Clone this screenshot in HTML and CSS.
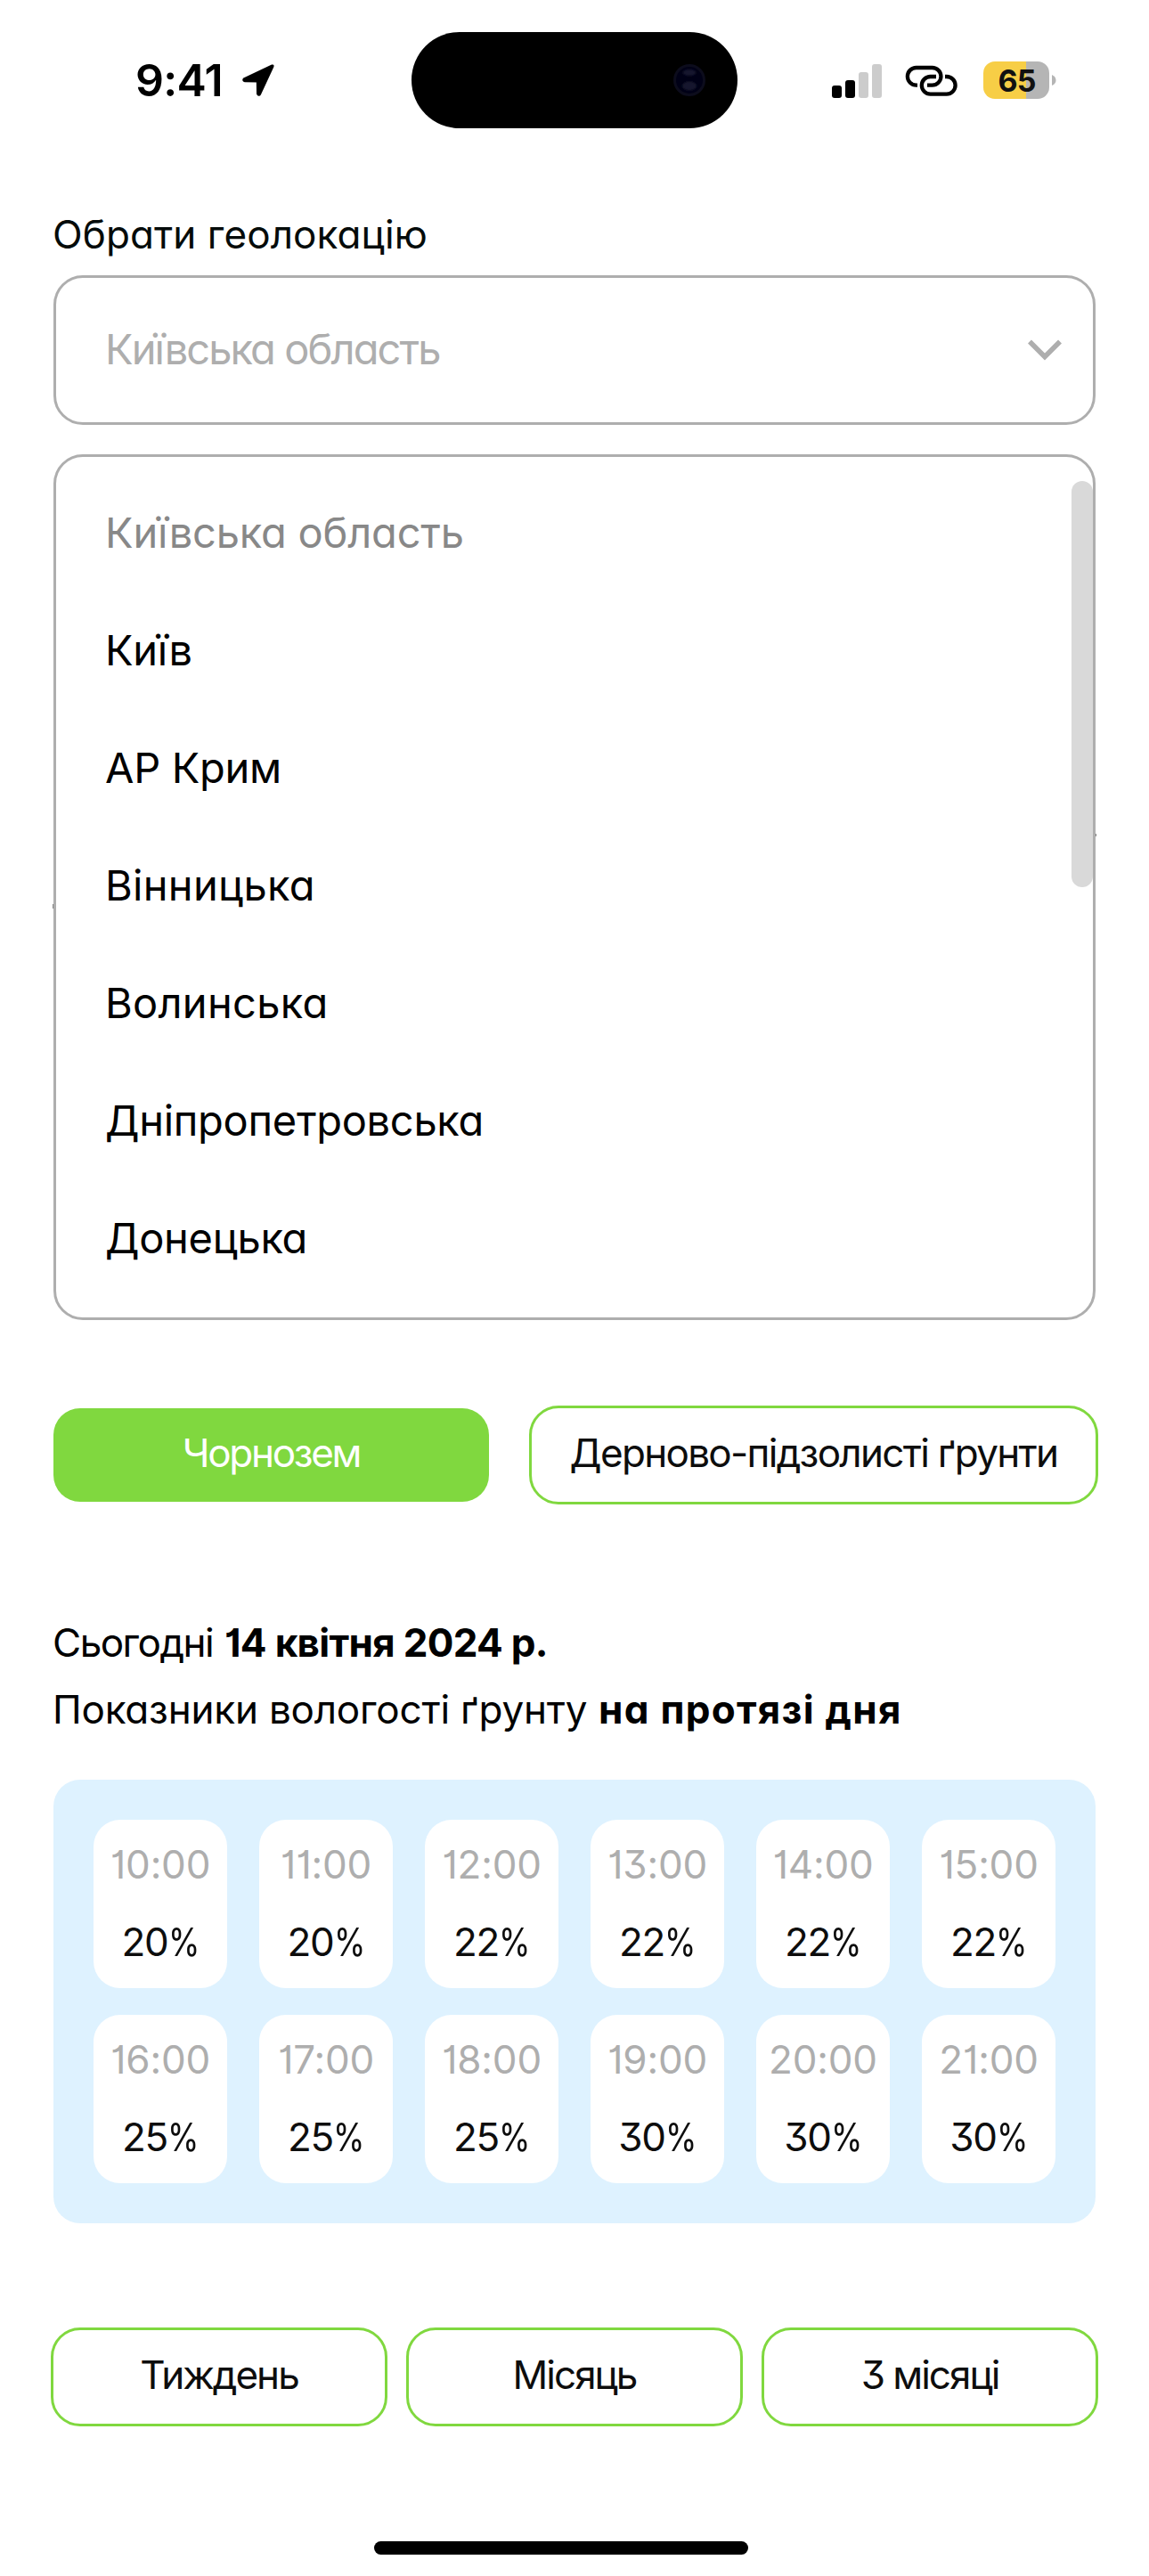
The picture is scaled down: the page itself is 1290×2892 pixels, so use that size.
FILE: index.html
```html
<!DOCTYPE html>
<html lang="uk">
<head>
<meta charset="utf-8">
<title>Вологість ґрунту</title>
<link rel="stylesheet" href="styles.css">
</head>
<body>
<header class="status">
  <div class="status-left">
    <span class="clock">9:41</span>
    <svg class="arrow" width="38" height="38" viewBox="0 0 38 38"><path d="M34.8 3.2L3.2 18.2Q2.6 19.2 4 19.4L18.6 19.6L18.8 34Q19.6 36 20.4 34.2Z" fill="#000" stroke="#000" stroke-width="3.6" stroke-linejoin="round"/></svg>
  </div>
  <div class="island"><svg width="36" height="36" viewBox="0 0 36 36"><defs><filter id="soft"><feGaussianBlur stdDeviation="1"/></filter></defs><circle cx="18" cy="18" r="16.5" fill="#000016" stroke="#0c0c1c" stroke-width="3"/><g fill="#17182d" filter="url(#soft)"><ellipse cx="18" cy="9.5" rx="7.5" ry="3.5"/><ellipse cx="18" cy="24.5" rx="8" ry="5"/></g></svg></div>
  <div class="status-right">
    <svg class="signal" width="56" height="38" viewBox="0 0 56 38"><rect y="24" width="11" height="14" rx="3"/><rect x="15" y="18" width="11" height="20" rx="3"/><g fill="#ccc"><rect x="30" y="9" width="11" height="29" rx="3"/><rect x="45" width="11" height="38" rx="3"/></g></svg>
    <svg class="link" width="60" height="36" viewBox="0 0 60 36" fill="none" stroke="#000" stroke-width="4.3"><path d="M14 22.7H12.7A9.85 9.85 0 0 1 12.7 3H30.6A9.85 9.85 0 0 1 30.6 22.7H25"/><path d="M35 13H28.6A9.8 9.8 0 0 0 28.6 32.6H46.8A9.8 9.8 0 0 0 46.8 13H45"/></svg>
    <div class="battery">65</div>
    <svg class="nub" width="5" height="12" viewBox="0 0 5 12"><path d="M0 0Q4.5 2 4.5 6T0 12Z" fill="#b5b5b5"/></svg>
  </div>
</header>
<main>
  <label class="label">Обрати геолокацію</label>
  <div class="select"><span>Київська область</span><svg width="38" height="24" viewBox="0 0 38 24"><path d="M2 2.5L19 19.5L36 2.5" fill="none" stroke="#aeaeae" stroke-width="5.6"/></svg></div>
  <div class="dropdown">
    <ul>
      <li class="current">Київська область</li>
      <li>Київ</li>
      <li>АР Крим</li>
      <li class="wide">Вінницька</li>
      <li class="wide">Волинська</li>
      <li>Дніпропетровська</li>
      <li>Донецька</li>
    </ul>
    <div class="thumb"></div>
  </div>
  <div class="soils">
    <button class="soil-active">Чорнозем</button>
    <button class="outline soil">Дерново-підзолисті ґрунти</button>
  </div>
  <div class="info">
    <p><span class="today">Сьогодні</span> <b class="date">14 квітня 2024 р.</b></p>
    <p><span class="metric">Показники вологості ґрунту</span> <b class="period">на протязі дня</b></p>
  </div>
  <section class="panel">
    <div class="card"><time>10:00</time><span>20<i>%</i></span></div>
    <div class="card"><time>11:00</time><span>20<i>%</i></span></div>
    <div class="card"><time>12:00</time><span>22<i>%</i></span></div>
    <div class="card"><time>13:00</time><span>22<i>%</i></span></div>
    <div class="card"><time>14:00</time><span>22<i>%</i></span></div>
    <div class="card"><time>15:00</time><span>22<i>%</i></span></div>
    <div class="card"><time>16:00</time><span>25<i>%</i></span></div>
    <div class="card"><time>17:00</time><span>25<i>%</i></span></div>
    <div class="card"><time>18:00</time><span>25<i>%</i></span></div>
    <div class="card"><time>19:00</time><span>30<i>%</i></span></div>
    <div class="card"><time>20:00</time><span>30<i>%</i></span></div>
    <div class="card"><time>21:00</time><span>30<i>%</i></span></div>
  </section>
  <div class="ranges">
    <button class="outline">Тиждень</button>
    <button class="outline">Місяць</button>
    <button class="outline">3 місяці</button>
  </div>
</main>
<div class="home"></div>
</body>
</html>
```
FILE: styles.css
```css
* { box-sizing: border-box; margin: 0; padding: 0; }
body {
  width: 1290px; height: 2892px; background: #fff; color: #000; overflow: hidden;
  font: 400 44px/1 Inter, sans-serif;
  font-feature-settings: "cv11", "cv01", "cv09";
  display: flex; flex-direction: column;
}
svg { display: block; flex: none; }
.status { display: grid; grid-template-columns: 462px 366px 1fr; height: 144px; padding-top: 36px; align-items: center; }
.status-left { display: flex; align-items: center; padding-left: 152px; }
.clock { font-size: 50px; font-weight: 600; letter-spacing: -.7px; width: 119px; font-feature-settings: normal; }
.island { height: 108px; border-radius: 54px; background: #000; display: flex; align-items: center; justify-content: flex-end; padding-right: 36px; }
.status-right { display: flex; align-items: center; padding-left: 106px; }
.signal { margin-top: 2px; }
.link { margin: 2px 28px 0 26px; }
.battery {
  width: 74px; height: 42px; border-radius: 13px; background: linear-gradient(90deg, #f7ce46 48px, #b5b5b5 48px);
  font-size: 34px; line-height: 43px; font-weight: 700; text-align: center; letter-spacing: -1px; color: #111; padding-left: 1px;
  font-feature-settings: normal;
}
.nub { margin-left: 3px; }
main { padding: 86px 57px 0; }
.label { display: block; margin-left: 2px; line-height: 66px; height: 79px; letter-spacing: .1px; color: #050b0a; }
.select {
  margin: 0 3px; height: 168px; border: 3px solid #aeaeae; border-radius: 33px; color: #aeaeae;
  display: flex; align-items: center; justify-content: space-between; padding: 0 35px 4px 55px;
  font-size: 47px; letter-spacing: -1.9px;
}
.select svg { position: relative; top: 2px; }
.dropdown { position: relative; margin: 33px 3px 0; height: 972px; border: 3px solid #aeaeae; border-radius: 33px; padding: 19px 0 0 55px; }
.dropdown ul { list-style: none; font-size: 47px; line-height: 132px; letter-spacing: -.3px; }
.current { color: #888; letter-spacing: -.2px; }
.wide { letter-spacing: .3px; }
.thumb { position: absolute; right: 0; top: 27px; width: 24px; height: 456px; border-radius: 12px; background: #d9d9d9; }
.dropdown::before, .dropdown::after { content: ""; position: absolute; width: 1px; background: #888; }
.dropdown::before { left: -4px; top: 502px; height: 5px; }
.dropdown::after { right: -4px; top: 423px; height: 3px; }
button { font: inherit; font-feature-settings: inherit; letter-spacing: -2px; color: #0d0d0d; background: none; border: 0; height: 111px; line-height: 100px; padding-bottom: 5px; text-align: center; }
.outline { border: 3px solid #80d83f; border-radius: 33px; }
.soils { display: flex; align-items: center; margin-top: 96px; padding-left: 3px; gap: 45px; }
.soil-active { width: 489px; height: 105px; background: #80d83f; color: #fff; border-radius: 30px; letter-spacing: -2.3px; }
.soil { width: 639px; letter-spacing: -1.7px; }
.info { margin-top: 118px; line-height: 75px; padding-left: 2px; height: 191px; white-space: nowrap; }
.info p { display: flex; }
.info b { font-weight: 700; }
.today { letter-spacing: -1.5px; width: 193px; }
.date { letter-spacing: -.7px; }
.metric { letter-spacing: -.2px; width: 613px; }
.period { letter-spacing: 1.3px; }
.panel { margin: 0 3px; height: 498px; background: #def2ff; border-radius: 30px; padding: 45px; display: grid; grid-template-columns: repeat(6, 150px); gap: 30px 36px; }
.card { height: 189px; background: #fff; border-radius: 30px; padding-top: 7px; text-align: center; line-height: 87px; }
.card time { display: block; color: #aeaeae; letter-spacing: -.2px; }
.card span { display: flex; justify-content: center; letter-spacing: -1.3px; color: #0d0d0d; }
.card i { font-style: normal; width: 35px; text-align: left; transform: scaleX(.82); transform-origin: left; }
.ranges { display: flex; gap: 21px; margin-top: 117px; }
.ranges button { width: 378px; }
.home { width: 420px; height: 15px; border-radius: 8px; background: #000; margin: 129px 0 0 420px; }
```
